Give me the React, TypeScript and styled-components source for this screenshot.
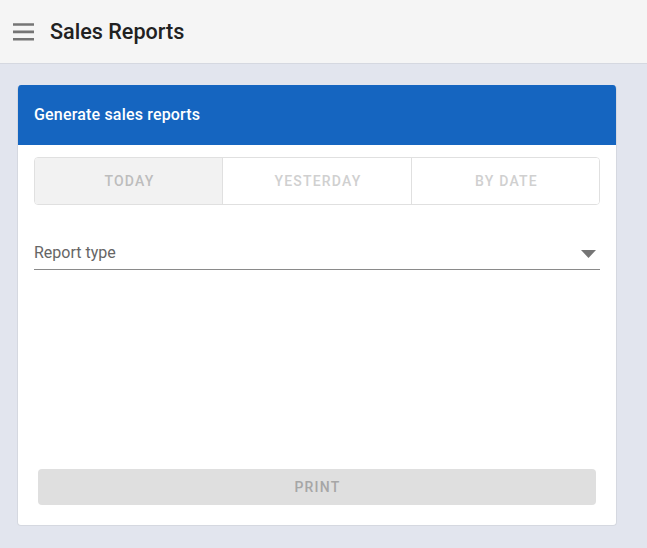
import React from "react";
import styled, { createGlobalStyle } from "styled-components";

const Global = createGlobalStyle`
  html, body { margin: 0; padding: 0; height: 100%; }
  body { font-family: Roboto, "Liberation Sans", sans-serif; background: #e2e5ee; overflow: hidden; }
  * { box-sizing: border-box; }
`;

const Page = styled.div`
  width: 647px;
  height: 548px;
  display: flex;
  flex-direction: column;
  background: #e2e5ee;
`;

const TopBar = styled.header`
  height: 64px;
  flex: none;
  display: flex;
  align-items: center;
  gap: 14px;
  padding-left: 12px;
  background: #f5f5f5;
  border-bottom: 1px solid #d5d8e0;
`;

const MenuIcon = styled.svg`
  width: 24px;
  height: 24px;
  display: block;
  fill: #757575;
`;

const Title = styled.h1`
  margin: 0;
  font-size: 21.6px;
  line-height: 32px;
  font-weight: 500;
  color: #212121;
`;

const Main = styled.main`
  flex: 1;
  padding: 21px 30px 22px 17px;
  display: flex;
`;

const Card = styled.section`
  flex: 1;
  display: flex;
  flex-direction: column;
  background: #fff;
  border-radius: 4px;
  overflow: hidden;
  border: 1px solid #d5d8e0;
  border-top: 0;
`;

const CardHeader = styled.div`
  height: 60px;
  flex: none;
  margin: 0 -1px;
  display: flex;
  align-items: center;
  padding: 0 0 2px 17px;
  background: #1565c0;
  color: #fff;
  font-size: 16px;
  font-weight: 500;
  letter-spacing: 0.18px;
`;

const CardBody = styled.div`
  flex: 1;
  display: flex;
  flex-direction: column;
  padding: 12px 16px 20px;
`;

const Tabs = styled.div`
  height: 48px;
  flex: none;
  display: grid;
  grid-template-columns: 187px 189px 1fr;
  border: 1px solid #e0e0e0;
  border-radius: 4px;
  overflow: hidden;
`;

const Tab = styled.div<{ $active?: boolean }>`
  display: flex;
  align-items: center;
  justify-content: center;
  padding: 0 0 1px 2px;
  font-size: 14px;
  font-weight: 500;
  letter-spacing: 1.2px;
  color: ${(p) => (p.$active ? "#bdbdbd" : "#d0d0d0")};
  background: ${(p) => (p.$active ? "#f2f2f2" : "#fff")};
  & + & { border-left: 1px solid #e0e0e0; }
`;

const Select = styled.div`
  margin-top: 30px;
  height: 35px;
  flex: none;
  display: flex;
  align-items: center;
  justify-content: space-between;
  padding: 0 4px 0 0;
  border-bottom: 1px solid #8a8a8a;
  font-size: 16px;
  color: #666;
`;

const Caret = styled.svg`
  width: 15px;
  height: 8px;
  margin-top: 4px;
  display: block;
  fill: #757575;
`;

const PrintButton = styled.button`
  margin: auto 4px 0;
  height: 36px;
  flex: none;
  border: 0;
  border-radius: 4px;
  background: #dfdfdf;
  color: #a6a6a6;
  font-family: inherit;
  font-size: 14px;
  font-weight: 500;
  letter-spacing: 1.25px;
  padding: 0 0 0 1px;
`;

export default function App() {
  return (
    <Page>
      <Global />
      <TopBar>
        <MenuIcon viewBox="0 0 24 24">
          <path d="M1 3.2h21v2.6H1zM1 10.6h21v2.6H1zM1 18h21v2.6H1z" />
        </MenuIcon>
        <Title>Sales Reports</Title>
      </TopBar>
      <Main>
        <Card>
          <CardHeader>Generate sales reports</CardHeader>
          <CardBody>
            <Tabs>
              <Tab $active>TODAY</Tab>
              <Tab>YESTERDAY</Tab>
              <Tab>BY DATE</Tab>
            </Tabs>
            <Select>
              <span>Report type</span>
              <Caret viewBox="0 0 16 8" preserveAspectRatio="none">
                <path d="M0 0h16L8 8z" />
              </Caret>
            </Select>
            <PrintButton disabled>PRINT</PrintButton>
          </CardBody>
        </Card>
      </Main>
    </Page>
  );
}
